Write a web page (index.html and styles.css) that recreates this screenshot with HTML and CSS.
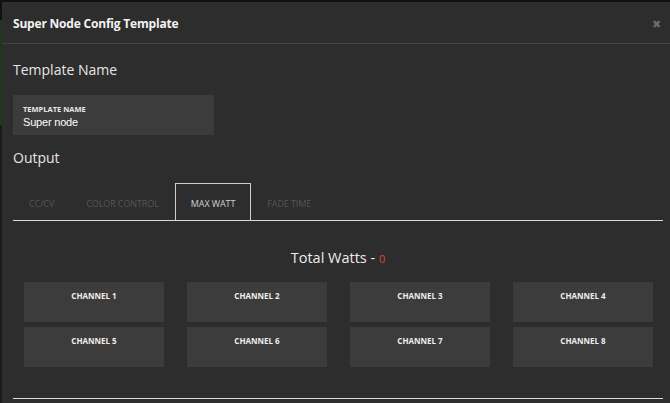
FILE: index.html
```html
<!DOCTYPE html>
<html>
<head>
<meta charset="utf-8">
<link rel="stylesheet" href="styles.css">
</head>
<body>
<div class="modal">
  <div class="modal-header">
    <div class="modal-title">Super Node Config Template</div>
    <div class="close">&#x2716;</div>
  </div>
  <div class="modal-body">
    <div class="section-title first">Template Name</div>
    <div class="field">
      <div class="field-label">TEMPLATE NAME</div>
      <div class="field-value">Super node</div>
    </div>
    <div class="section-title">Output</div>
    <div class="tabs">
      <div class="tab">CC/CV</div>
      <div class="tab">COLOR CONTROL</div>
      <div class="tab active">MAX WATT</div>
      <div class="tab">FADE TIME</div>
    </div>
    <div class="total">Total Watts - <span class="zero">0</span></div>
    <div class="channels">
      <div class="channel">CHANNEL 1</div>
      <div class="channel">CHANNEL 2</div>
      <div class="channel">CHANNEL 3</div>
      <div class="channel">CHANNEL 4</div>
      <div class="channel">CHANNEL 5</div>
      <div class="channel">CHANNEL 6</div>
      <div class="channel">CHANNEL 7</div>
      <div class="channel">CHANNEL 8</div>
    </div>
    <div class="bottom-line"></div>
  </div>
</div>
</body>
</html>
```
FILE: styles.css
```css
html, body {
  margin: 0;
  padding: 0;
  height: 100%;
  overflow: hidden;
}
body {
  font-family: "Open Sans", "Liberation Sans", sans-serif;
  padding: 2px 0 0 2px;
  box-sizing: border-box;
  background: linear-gradient(to bottom, #111 0, #111 20px, #1d3a1d 20px, #1d3a1d 125px, #1a1a1a 125px);
}
.modal {
  background: #2d2d2d;
  width: 680px;
  height: 420px;
}
.modal-header {
  display: flex;
  align-items: center;
  justify-content: space-between;
  height: 41px;
  border-bottom: 1px solid #454545;
  padding: 0 12px 0 11px;
}
.modal-title {
  color: #f2f2f2;
  font-size: 12px;
  font-weight: 700;
  letter-spacing: -0.2px;
  margin-top: 1px;
}
.close {
  color: #6a6a6a;
  font-size: 11px;
  margin-right: 9px;
  margin-top: 1px;
}
.modal-body {
  width: 650px;
  padding: 0 0 0 11px;
}
.section-title {
  color: #e6e6e6;
  font-size: 14px;
  line-height: 20px;
  margin-top: 13px;
}
.section-title.first {
  margin-top: 16px;
}
.field {
  margin-top: 15px;
  width: 201px;
  height: 40px;
  background: #3c3c3c;
  box-sizing: border-box;
  padding: 9px 10px 0;
}
.field-label {
  color: #e8e8e8;
  font-size: 7.5px;
  font-weight: 700;
  line-height: 10px;
}
.field-value {
  color: #ffffff;
  font-size: 11px;
  line-height: 15px;
  margin-top: 1px;
  font-family: "Liberation Sans", sans-serif;
  letter-spacing: -0.2px;
}
.tabs {
  display: flex;
  margin-top: 15px;
  height: 37px;
  border-bottom: 1px solid #dcdcdc;
}
.tab {
  display: flex;
  align-items: center;
  justify-content: center;
  height: 37px;
  box-sizing: border-box;
  font-size: 9px;
  color: #555555;
  padding: 3px 16px 0;
  letter-spacing: -0.1px;
}
.tab.active {
  border: 1px solid #cfcfcf;
  border-bottom: none;
  color: #cfcfcf;
  padding: 2px 15px 0;
}
.total {
  text-align: center;
  color: #ececec;
  font-size: 14.5px;
  margin-top: 27px;
  line-height: 20px;
}
.total .zero {
  color: #d9483f;
  font-size: 11px;
}
.channels {
  display: grid;
  grid-template-columns: repeat(4, 140px);
  column-gap: 23px;
  row-gap: 5px;
  margin-top: 13px;
  padding-left: 11px;
}
.channel {
  height: 40px;
  background: #3c3c3c;
  color: #eeeeee;
  font-size: 8px;
  font-weight: 700;
  text-align: center;
  padding-top: 8px;
  box-sizing: border-box;
}
.bottom-line {
  margin-top: 31px;
  height: 1px;
  background: #dcdcdc;
}
```
